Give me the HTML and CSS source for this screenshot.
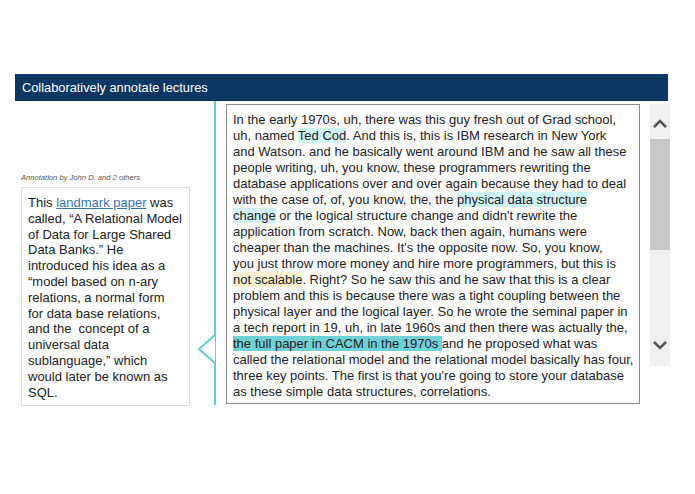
FILE: index.html
```html
<!DOCTYPE html>
<html>
<head>
<meta charset="utf-8">
<link rel="stylesheet" href="styles.css">
</head>
<body>
<div class="header">Collaboratively annotate lectures</div>
<div class="workspace">
  <div class="annotation">
    <div class="ann-label">Annotation by John D. and 2 others</div>
    <div class="ann-box">This <a class="link" href="#">landmark paper</a> was<br>called, “A Relational Model<br>of Data for Large Shared<br>Data Banks.” He<br>introduced his idea as a<br>“model based on n-ary<br>relations, a normal form<br>for data base relations,<br>and the &nbsp;concept of a<br>universal data<br>sublanguage,” which<br>would later be known as<br>SQL.</div>
  </div>
  <div class="rail">
    <svg class="pointer" width="19" height="30" viewBox="0 0 19 30"><polyline points="18,1 2,15 18,29" fill="#fff" stroke="#5fcfd3" stroke-width="2"/></svg>
  </div>
  <div class="transcript">In the early 1970s, uh, there was this guy fresh out of Grad school,<br>uh, named <span class="hl-light">Ted Cod</span>. And this is, this is IBM research in New York<br>and Watson. and he basically went around IBM and he saw all these<br>people writing, uh, you know, these programmers rewriting the<br>database applications over and over again because they had to deal<br>with the case of, of, you know, the, the <span class="hl-light">physical data structure<br>change</span> or the logical structure change and didn't rewrite the<br>application from scratch. Now, back then again, humans were<br>cheaper than the machines. It's the opposite now. So, you know,<br>you just throw more money and hire more programmers, but this is<br><span class="hl-yellow">not scalable</span>. Right? So he saw this and he saw that this is a clear<br>problem and this is because there was a tight coupling between the<br>physical layer and the logical layer. So he wrote the seminal paper in<br>a tech report in 19, uh, in late 1960s and then there was actually the,<br><span class="hl-strong">the full paper in CACM in the 1970s </span>and he proposed what was<br>called the relational model and the relational model basically has four,<br>three key points. The first is that you're going to store your database<br>as these simple data structures, correlations.</div>
  <div class="scrollbar">
    <svg class="chev" width="20" height="14" viewBox="0 0 20 14"><polyline points="4,10 10,4 16,10" fill="none" stroke="#555" stroke-width="2.6"/></svg>
    <div class="thumb"></div>
    <div class="track"></div>
    <svg class="chev" width="20" height="14" viewBox="0 0 20 14"><polyline points="4,4 10,10 16,4" fill="none" stroke="#555" stroke-width="2.6"/></svg>
  </div>
</div>
</body>
</html>
```

FILE: styles.css
```css
html, body {
  margin: 0;
  padding: 0;
  background: #fff;
}
body {
  font-family: "Liberation Sans", Arial, sans-serif;
  color: #222;
}
.header {
  margin: 74px 0 0 15px;
  width: 646px;
  height: 27px;
  padding-left: 7px;
  background: #0b3762;
  color: #fff;
  font-size: 12.8px;
  line-height: 28px;
}
.workspace {
  display: flex;
  align-items: flex-start;
  margin-left: 21px;
}
.annotation {
  width: 169px;
  margin-top: 72px;
}
.ann-label {
  font-size: 7.6px;
  font-style: italic;
  color: #555;
  line-height: 10px;
  margin-bottom: 4px;
  white-space: nowrap;
}
.ann-box {
  box-sizing: border-box;
  width: 169px;
  height: 219px;
  border: 1px solid #dcdcdc;
  padding: 7px 4px 5px 6px;
  font-size: 13px;
  line-height: 15.8px;
  color: #222;
  white-space: nowrap;
}
.link {
  color: #3a73b0;
  text-decoration: underline;
}
.rail {
  position: relative;
  margin-left: 24px;
  width: 2px;
  height: 304px;
  background: #5fcfd3;
}
.pointer {
  position: absolute;
  left: -17px;
  top: 233px;
}
.transcript {
  box-sizing: border-box;
  width: 414px;
  height: 300px;
  margin-left: 10px;
  margin-top: 3px;
  border: 1px solid #8a8a8a;
  padding: 7px 4px 4px 6px;
  font-size: 13px;
  line-height: 16px;
  color: #222;
  white-space: nowrap;
}
.hl-light {
  background: #cff2f4;
}
.hl-yellow {
  background: #fdf0cf;
}
.hl-strong {
  background: #6dd1d6;
}
.scrollbar {
  display: flex;
  flex-direction: column;
  margin-left: 10px;
  margin-top: 3px;
  width: 20px;
  height: 262px;
  background: #f0f0f0;
}
.chev {
  display: block;
  margin-top: 13px;
  margin-bottom: 8px;
}
.thumb {
  height: 111px;
  background: #c9c9c9;
}
.track {
  flex: 1;
}
.scrollbar .chev:last-child {
  margin-top: 0;
  margin-bottom: 14px;
}
```
